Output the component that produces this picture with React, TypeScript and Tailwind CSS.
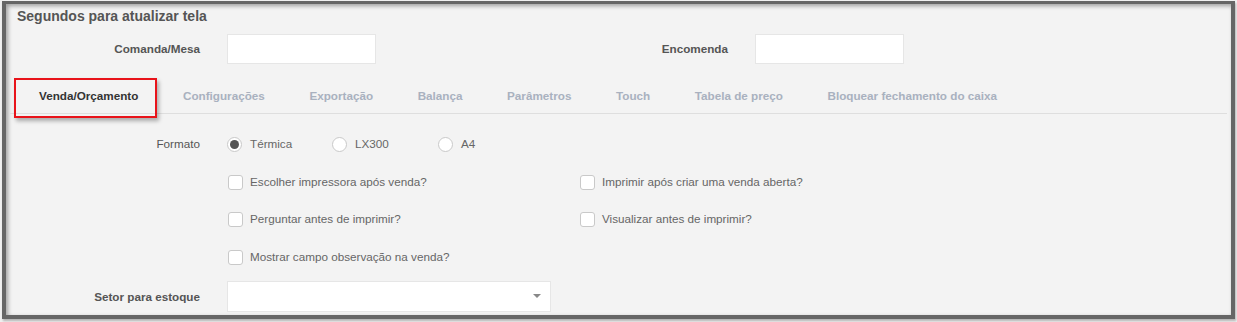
import React from "react";

const font = { fontFamily: '"Liberation Sans", Arial, sans-serif' };

function Checkbox({ label }: { label: string }) {
  return (
    <div className="flex items-center h-[20px]">
      <span className="w-[15px] h-[15px] ml-[1px] rounded-[3px] border border-[#c9c9c9] bg-white shrink-0" />
      <span className="ml-[7px] text-[11.7px] text-[#666]">{label}</span>
    </div>
  );
}

function Radio({ label, checked, w }: { label: string; checked?: boolean; w: string }) {
  return (
    <div className={`flex items-center h-[20px] ${w}`}>
      <span className="w-[15px] h-[15px] rounded-full border border-[#c9c9c9] bg-white flex items-center justify-center shrink-0">
        {checked && <span className="w-[9px] h-[9px] rounded-full bg-[#555]" />}
      </span>
      <span className="ml-[8px] text-[11.7px] text-[#666]">{label}</span>
    </div>
  );
}

export default function App() {
  const tabs = [
    "Configurações",
    "Exportação",
    "Balança",
    "Parâmetros",
    "Touch",
    "Tabela de preço",
    "Bloquear fechamento do caixa",
  ];
  return (
    <div className="w-[1237px] h-[322px] bg-[#f0f0f0] pt-[1px] pl-[2px]" style={font}>
      <div className="relative w-[1233px] h-[318px] bg-[#f3f3f3] border-t-[3px] border-l-[4px] border-r-[4px] border-b-[4px] border-[#666] shadow-[inset_2px_2px_4px_rgba(0,0,0,0.35),1px_2px_2px_rgba(0,0,0,0.25)] overflow-hidden">
        {/* Title */}
        <div className="pl-[11px] mt-[2px] h-[20px] leading-[20px] text-[14px] font-bold text-[#555]">
          Segundos para atualizar tela
        </div>

        {/* Row 1 */}
        <div className="flex items-center mt-[8px] h-[30px]">
          <div className="w-[194px] text-right text-[11.7px] font-bold text-[#555]">Comanda/Mesa</div>
          <div className="ml-[27px] w-[149px] h-[30px] bg-white border border-[#e6e6e6]" />
          <div className="w-[352px] text-right text-[11.7px] font-bold text-[#555]">Encomenda</div>
          <div className="ml-[27px] w-[149px] h-[30px] bg-white border border-[#e6e6e6]" />
        </div>

        {/* Tabs */}
        <div className="mt-[14px] ml-[4px] mr-[4px] h-[36px] flex border-b border-[#dedede]">
          <div className="pl-[29px] pr-[22.3px] flex items-center text-[11.7px] font-bold text-[#333]">
            Venda/Orçamento
          </div>
          {tabs.map((t) => (
            <div key={t} className="px-[22.3px] flex items-center text-[11.7px] font-bold text-[#a9b1bf]">
              {t}
            </div>
          ))}
        </div>

        {/* Red annotation rectangle */}
        <div className="absolute left-[8px] top-[74px] w-[143px] h-[40px] border-2 border-[#e8131a] shadow-[2px_3px_4px_rgba(0,0,0,0.3)]" />

        {/* Formato */}
        <div className="flex items-center mt-[20px] h-[20px]">
          <div className="w-[194px] text-right text-[11.7px] text-[#555]">Formato</div>
          <div className="ml-[27px] flex">
            <Radio label="Térmica" checked w="w-[105px]" />
            <Radio label="LX300" w="w-[106px]" />
            <Radio label="A4" w="w-[100px]" />
          </div>
        </div>

        {/* Checkboxes */}
        <div className="ml-[221px] grid grid-cols-[352px_352px] mt-[18px] gap-y-[17px]">
          <Checkbox label="Escolher impressora após venda?" />
          <Checkbox label="Imprimir após criar uma venda aberta?" />
          <Checkbox label="Perguntar antes de imprimir?" />
          <Checkbox label="Visualizar antes de imprimir?" />
          <div className="mt-[1px]">
            <Checkbox label="Mostrar campo observação na venda?" />
          </div>
        </div>

        {/* Setor para estoque */}
        <div className="flex items-center mt-[14px] h-[31px]">
          <div className="w-[194px] text-right text-[11.7px] font-bold text-[#555]">Setor para estoque</div>
          <div className="ml-[27px] w-[324px] h-[31px] bg-white border border-[#e6e6e6] flex items-center justify-end pr-[9px]">
            <svg width="8" height="5" viewBox="0 0 8 5">
              <path d="M0 0 L8 0 L4 4 Z" fill="#888" />
            </svg>
          </div>
        </div>
      </div>
    </div>
  );
}
